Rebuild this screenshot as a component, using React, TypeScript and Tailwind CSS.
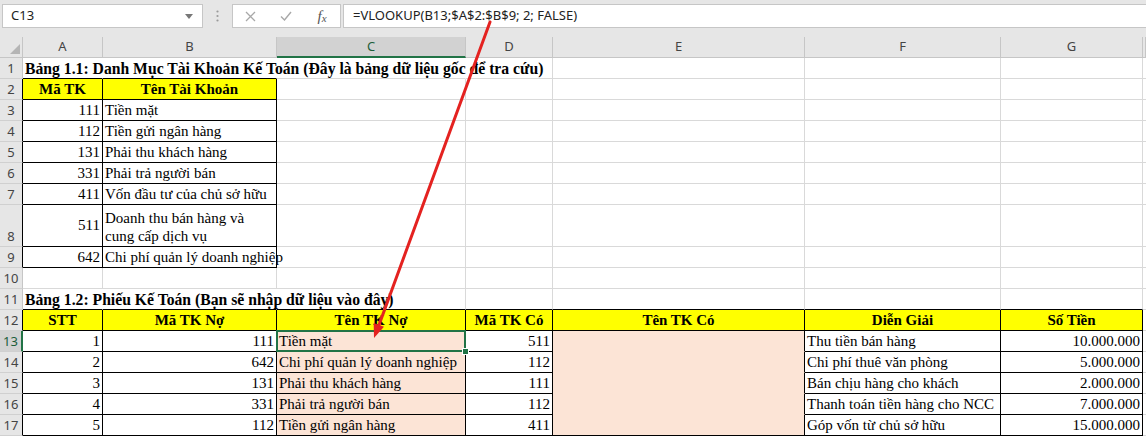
import React from 'react';
import clsx from 'clsx';

type Edge = 'g' | 'k' | 'n' | 'p';
type Cell = {
  t?: string;
  a?: 'l' | 'r' | 'c';
  bold?: boolean;
  title?: boolean;
  fill?: 'y' | 'p';
  r?: Edge;
  b?: Edge;
  wrap?: boolean;
  mid?: boolean;
  sel?: boolean;
};
type Row = { n: number; tall?: boolean; edge?: boolean; cells: Cell[] };

const COLS = 'grid grid-cols-[23px_80px_174px_189px_87px_252px_196px_142px_1fr]';

const rightEdge: Record<Edge, string> = {
  g: 'border-r-[#d9d9d9]',
  k: 'border-r-black',
  n: 'border-r-white',
  p: 'border-r-[#fce4d6]',
};
const bottomEdge: Record<Edge, string> = {
  g: 'border-b-[#d9d9d9]',
  k: 'border-b-black',
  n: 'border-b-white',
  p: 'border-b-[#fce4d6]',
};

const accounts: [string, string][] = [
  ['111', 'Tiền mặt'],
  ['112', 'Tiền gửi ngân hàng'],
  ['131', 'Phải thu khách hàng'],
  ['331', 'Phải trả người bán'],
  ['411', 'Vốn đầu tư của chủ sở hữu'],
  ['511', 'Doanh thu bán hàng và cung cấp dịch vụ'],
  ['642', 'Chi phí quản lý doanh nghiệp'],
];

const entries = [
  ['1', '111', 'Tiền mặt', '511', 'Thu tiền bán hàng', '10.000.000'],
  ['2', '642', 'Chi phí quản lý doanh nghiệp', '112', 'Chi phí thuê văn phòng', '5.000.000'],
  ['3', '131', 'Phải thu khách hàng', '111', 'Bán chịu hàng cho khách', '2.000.000'],
  ['4', '331', 'Phải trả người bán', '112', 'Thanh toán tiền hàng cho NCC', '7.000.000'],
  ['5', '112', 'Tiền gửi ngân hàng', '411', 'Góp vốn từ chủ sở hữu', '15.000.000'],
];

const fill = (n: number): Cell[] => Array.from({ length: n }, () => ({}));

const rows: Row[] = [];
rows.push({
  n: 1,
  cells: [
    { t: 'Bảng 1.1: Danh Mục Tài Khoản Kế Toán (Đây là bảng dữ liệu gốc để tra cứu)', bold: true, title: true, r: 'n', b: 'k' },
    { r: 'n', b: 'k' },
    { r: 'n' },
    ...fill(5),
  ],
});
rows.push({
  n: 2,
  edge: true,
  cells: [
    { t: 'Mã TK', a: 'c', bold: true, fill: 'y', r: 'k', b: 'k' },
    { t: 'Tên Tài Khoản', a: 'c', bold: true, fill: 'y', r: 'k', b: 'k' },
    ...fill(6),
  ],
});
accounts.forEach(([code, name], i) => {
  const tall = code === '511';
  rows.push({
    n: 3 + i,
    tall,
    edge: true,
    cells: [
      { t: code, a: 'r', r: 'k', b: 'k', mid: tall },
      { t: name, r: 'k', b: 'k', wrap: tall },
      ...fill(6),
    ],
  });
});
rows.push({ n: 10, cells: fill(8) });
rows.push({
  n: 11,
  cells: [
    { t: 'Bảng 1.2: Phiếu Kế Toán (Bạn sẽ nhập dữ liệu vào đây)', bold: true, title: true, r: 'n', b: 'k' },
    { r: 'n', b: 'k' },
    { b: 'k' },
    { b: 'k' },
    { b: 'k' },
    { b: 'k' },
    { b: 'k' },
    {},
  ],
});
rows.push({
  n: 12,
  edge: true,
  cells: [
    ...['STT', 'Mã TK Nợ', 'Tên TK Nợ', 'Mã TK Có', 'Tên TK Có', 'Diễn Giải', 'Số Tiền'].map(
      (t): Cell => ({ t, a: 'c', bold: true, fill: 'y', r: 'k', b: 'k' })
    ),
    {},
  ],
});
entries.forEach(([stt, no, tenNo, co, dien, tien], i) => {
  const last = i === entries.length - 1;
  rows.push({
    n: 13 + i,
    edge: true,
    cells: [
      { t: stt, a: 'r', r: 'k', b: 'k' },
      { t: no, a: 'r', r: 'k', b: 'k' },
      { t: tenNo, fill: 'p', r: 'k', b: 'k', sel: i === 0 },
      { t: co, a: 'r', r: 'k', b: 'k' },
      { fill: 'p', r: 'k', b: last ? 'k' : 'p' },
      { t: dien, r: 'k', b: 'k' },
      { t: tien, a: 'r', r: 'k', b: 'k' },
      {},
    ],
  });
});

function SheetCell({ c, tall }: { c: Cell; tall?: boolean }) {
  return (
    <div
      className={clsx(
        'relative flex min-w-0 border-r border-b px-[2px]',
        tall ? 'h-[42px]' : 'h-[21px]',
        c.mid ? 'items-center' : 'items-end',
        c.fill === 'y' ? 'bg-[#ffff00]' : c.fill === 'p' ? 'bg-[#fce4d6]' : 'bg-white',
        c.a === 'r' ? 'justify-end' : c.a === 'c' ? 'justify-center' : 'justify-start',
        rightEdge[c.r ?? 'g'],
        bottomEdge[c.b ?? 'g']
      )}
    >
      {c.t && (
        <span
          className={clsx(
            'relative z-10 text-black',
            c.title ? 'text-[15.7px]' : 'text-[15px]',
            c.bold && 'font-bold',
            c.wrap ? 'whitespace-normal leading-[18px] pb-[1px]' : 'whitespace-nowrap leading-[19px]'
          )}
        >
          {c.t}
        </span>
      )}
      {c.sel && (
        <div className="absolute -left-px -top-px -right-px -bottom-px z-20 border-2 border-[#217346]">
          <div className="absolute -right-[5px] -bottom-[5px] h-[7px] w-[7px] border border-white bg-[#217346]" />
        </div>
      )}
    </div>
  );
}

function FormulaBar() {
  return (
    <div className="flex h-[37px] items-start bg-[#e6e6e6] pl-[2px] pt-[4px] font-['Noto_Sans',sans-serif] text-[13px] text-[#222]">
      <div className="flex h-[24px] w-[201px] items-center justify-between border border-[#c6c6c6] bg-white pl-[8px] pr-[9px]">
        <span>C13</span>
        <svg width="8" height="5" viewBox="0 0 8 5">
          <path d="M0 0h8L4 5z" fill="#777" />
        </svg>
      </div>
      <div className="flex h-[24px] w-[29px] items-center justify-center">
        <svg width="3" height="12" viewBox="0 0 3 12">
          <circle cx="1.5" cy="1.5" r="1.1" fill="#9a9a9a" />
          <circle cx="1.5" cy="6" r="1.1" fill="#9a9a9a" />
          <circle cx="1.5" cy="10.5" r="1.1" fill="#9a9a9a" />
        </svg>
      </div>
      <div className="flex h-[24px] w-[109px] items-center border border-[#c6c6c6] bg-white">
        <div className="flex w-[34px] justify-center">
          <svg width="11" height="11" viewBox="0 0 11 11">
            <path d="M1 1l9 9M10 1l-9 9" stroke="#a8a8a8" strokeWidth="1.3" />
          </svg>
        </div>
        <div className="flex w-[38px] justify-center">
          <svg width="12" height="10" viewBox="0 0 12 10">
            <path d="M1 5.5l3.5 3.5L11 1" stroke="#a8a8a8" strokeWidth="1.4" fill="none" />
          </svg>
        </div>
        <div className="flex w-[34px] justify-center font-['Liberation_Serif',serif] text-[15px] italic text-[#555]">
          f<span className="text-[11px] leading-[20px] pt-[3px]">x</span>
        </div>
      </div>
      <div className="ml-[2px] flex h-[24px] flex-1 items-center border border-[#c6c6c6] border-r-0 bg-white pl-[9px]">
        =VLOOKUP(B13;$A$2:$B$9; 2; FALSE)
      </div>
    </div>
  );
}

function ColumnHeaders() {
  const letters = ['A', 'B', 'C', 'D', 'E', 'F', 'G', ''];
  return (
    <div className={COLS}>
      <div className="relative h-[21px] border-r border-b border-[#c6c6c6] bg-[#e6e6e6]">
        <svg className="absolute right-[2px] bottom-[3px]" width="10" height="10" viewBox="0 0 10 10">
          <path d="M10 0v10H0z" fill="#b5b5b5" />
        </svg>
      </div>
      {letters.map((l, i) => (
        <div
          key={i}
          className={clsx(
            "flex h-[21px] items-center justify-center border-r border-[#c6c6c6] font-['Noto_Sans',sans-serif] text-[13px]",
            l === 'C'
              ? 'border-b-2 border-b-[#217346] bg-[#d2d2d2] text-[#1d5e3a]'
              : 'border-b bg-[#e6e6e6] text-[#444]'
          )}
        >
          {l}
        </div>
      ))}
    </div>
  );
}

export default function App() {
  return (
    <div className="relative h-[438px] w-[1146px] overflow-hidden bg-white font-['Liberation_Serif',serif]">
      <FormulaBar />
      <ColumnHeaders />
      {rows.map((row) => (
        <div key={row.n} className={COLS}>
          <div
            className={clsx(
              "flex items-end justify-center border-b border-[#d0d0d0] pb-[1px] font-['Noto_Sans',sans-serif] text-[13px] leading-[17px]",
              row.tall ? 'h-[42px]' : 'h-[21px]',
              row.n === 13
                ? 'border-r-2 border-r-[#217346] bg-[#d2d2d2] text-[#1d5e3a]'
                : clsx('border-r bg-[#e6e6e6] text-[#444]', row.edge ? 'border-r-black' : 'border-r-[#c6c6c6]')
            )}
          >
            {row.n}
          </div>
          {row.cells.map((c, i) => (
            <SheetCell key={i} c={c} tall={row.tall} />
          ))}
        </div>
      ))}
      <svg
        className="pointer-events-none absolute inset-0 z-30"
        width="1146"
        height="438"
        viewBox="0 0 1146 438"
      >
        <line x1="490" y1="22" x2="379" y2="325" stroke="#e42220" strokeWidth="3" strokeLinecap="round" />
        <polygon points="374,338 384,326.8 373.7,323" fill="#e42220" />
      </svg>
    </div>
  );
}
